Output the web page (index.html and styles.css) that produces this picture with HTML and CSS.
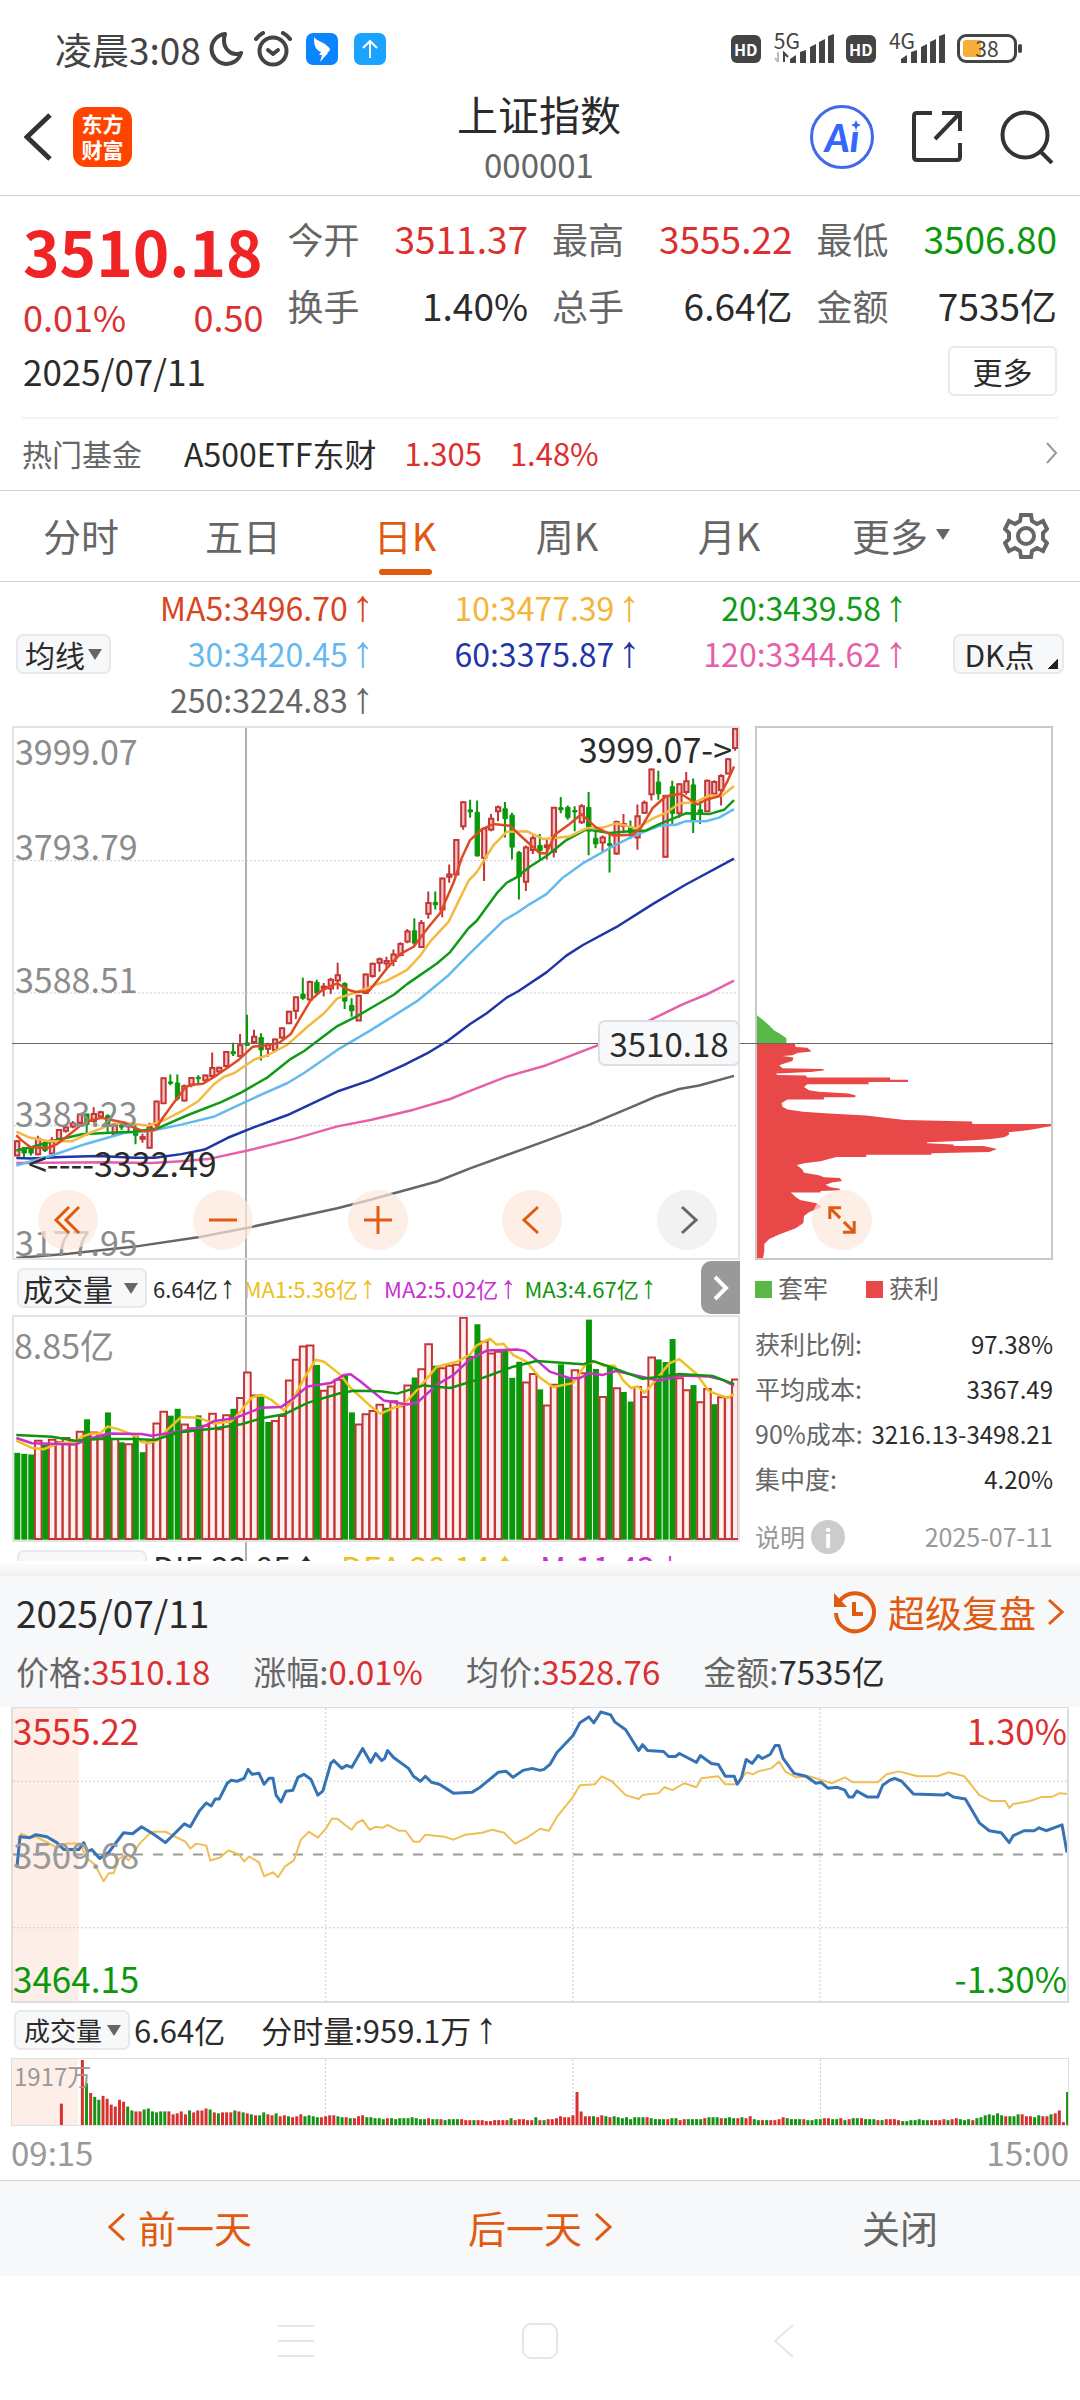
FILE: index.html
```html
<!DOCTYPE html>
<html lang="zh-CN">

<head>
  <meta charset="UTF-8">
  <meta name="viewport" content="width=device-width, initial-scale=1.0">
  <title>上证指数 000001</title>

  <link rel="stylesheet" href="styles.css">
</head>

<body>

  <div class="statusbar">
    <span class="clock">凌晨3:08</span>
    <svg class="st-moon" width="34" height="36" viewBox="0 0 34 36"><path d="M16 3A15 15 0 1 0 32 22C22 26 12 17 16 3Z" fill="none" stroke="#444" stroke-width="4" stroke-linejoin="round"/></svg>
    <svg class="st-alarm" width="38" height="36" viewBox="0 0 38 36"><g fill="none" stroke="#444" stroke-width="4" stroke-linecap="round"><circle cx="19" cy="20" r="13.5"/><path d="M2 8Q5 4 9 2M36 8Q33 4 29 2"/><path d="M14 19L19 23L24 19" stroke-linejoin="round"/></g></svg>
    <svg class="st-app" width="32" height="32" viewBox="0 0 32 32"><rect width="32" height="32" rx="7" fill="#0a84ff"/><path d="M8 4C10 8 21 10 24 16C24 18 21 20 21 20H22L14 29L16 22H13L15 19C10 17 9 13 9 13C8 10 8 7 8 4Z" fill="#fff"/></svg>
    <svg class="st-app" width="32" height="32" viewBox="0 0 32 32"><rect width="32" height="32" rx="7" fill="#1aa3ff"/><path d="M16 25V8M9 15L16 8L23 15" fill="none" stroke="#fff" stroke-width="2"/></svg>

    <div class="signals">
      <span class="hd">HD</span>
      <span class="net">5G</span>
      <svg class="bars" width="60" height="30" viewBox="0 0 60 30"><path d="M4 18V28M1 24L4 28" stroke="#bbb" stroke-width="2" fill="none"/><path d="M10 28V19L14 23" stroke="#444" stroke-width="2" fill="none"/><path d="M16 29V25L22 21V29ZM26 29V18L32 16V29ZM36 29V13L42 10V29ZM45 29V8L51 5V29ZM54 29V2L60 0V29Z" fill="#444"/></svg>
      <span class="hd">HD</span>
      <span class="net">4G</span>
      <svg class="bars" width="44" height="30" viewBox="16 0 44 30"><path d="M16 29V25L22 21V29ZM26 29V18L32 16V29ZM36 29V13L42 10V29ZM45 29V8L51 5V29ZM54 29V2L60 0V29Z" fill="#444"/></svg>
      <span class="battery">38</span>
    </div>
  </div>

  <header class="topbar">
    <button class="icon-btn" aria-label="返回"><svg width="30" height="50" viewBox="0 0 30 50"><path d="M26 3L3 25L26 47" fill="none" stroke="#333" stroke-width="5"/></svg></button>
    <a class="logo" href="#">东方<br>财富</a>
    <div class="title">
      <h1>上证指数</h1>
      <p>000001</p>
    </div>
    <div class="actions">
      <button class="ai" aria-label="AI 助手">Ai<svg width="10" height="10" viewBox="0 0 10 10"><path d="M5 0L6.500 3.500L10 5L6.500 6.500L5 10L3.500 6.500L0 5L3.500 3.500Z" fill="#3366ff"/></svg></button>
      <button class="icon-btn" aria-label="分享"><svg width="52" height="54" viewBox="0 0 52 54"><g fill="none" stroke="#333" stroke-width="4"><path d="M21 3H6Q3 3 3 6V47Q3 50 6 50H46Q49 50 49 47V33"/><path d="M31 3H49V21M48 4L24 29"/></g></svg></button>
      <button class="icon-btn" aria-label="搜索"><svg width="54" height="54" viewBox="0 0 54 54"><g fill="none" stroke="#333" stroke-width="4"><circle cx="25" cy="25" r="22.500"/><path d="M40 41L52 53"/></g></svg></button>
    </div>
  </header>

  <section class="quote">
    <div class="quote-grid">
      <div class="price-box">
        <strong class="price">3510.18</strong>
        <div class="change"><span>0.01%</span><span>0.50</span></div>
      </div>
      <dl class="stats">
        <div><dt>今开</dt><dd class="red">3511.37</dd></div>
        <div><dt>换手</dt><dd>1.40%</dd></div>
      </dl>
      <dl class="stats">
        <div><dt>最高</dt><dd class="red">3555.22</dd></div>
        <div><dt>总手</dt><dd>6.64亿</dd></div>
      </dl>
      <dl class="stats">
        <div><dt>最低</dt><dd class="green">3506.80</dd></div>
        <div><dt>金额</dt><dd>7535亿</dd></div>
      </dl>
    </div>
    <div class="quote-foot">
      <time>2025/07/11</time>
      <button class="more">更多</button>
    </div>
  </section>

  <a class="fund" href="#">
    <span class="fund-label">热门基金</span>
    <span class="fund-name">A500ETF东财</span>
    <span class="red">1.305</span>
    <span class="red">1.48%</span>
    <svg width="12" height="22" viewBox="0 0 12 22"><path d="M1 1L10 11L1 21" fill="none" stroke="#999" stroke-width="2"/></svg>
  </a>

  <nav class="tabs">
    <button>分时</button>
    <button>五日</button>
    <button class="active">日K</button>
    <button>周K</button>
    <button>月K</button>
    <button class="tab-more">更多<i class="caret"></i></button>
    <button class="gear" aria-label="设置"><svg width="46" height="48" viewBox="0 0 46 48"><g fill="none" stroke="#666" stroke-width="4"><path d="M18 3H28L29 9L34 12L40 9L44 17L40 21V27L44 31L40 39L34 36L29 39L28 45H18L17 39L12 36L6 39L2 31L6 27V21L2 17L6 9L12 12L17 9Z"/><circle cx="23" cy="24" r="8"/></g></svg></button>
  </nav>

  <section class="averages">
    <label class="picker picker-ma"><select aria-label="指标"><option>均线</option></select></label>
    <ul class="ma-list">
      <li class="c-ma5">MA5:3496.70<i class="arr">↑</i></li>
      <li class="c-ma10">10:3477.39<i class="arr">↑</i></li>
      <li class="c-ma20">20:3439.58<i class="arr">↑</i></li>
      <li class="c-ma30">30:3420.45<i class="arr">↑</i></li>
      <li class="c-ma60">60:3375.87<i class="arr">↑</i></li>
      <li class="c-ma120">120:3344.62<i class="arr">↑</i></li>
      <li class="c-ma250">250:3224.83<i class="arr">↑</i></li>
    </ul>
    <button class="dk">DK点</button>
  </section>

  <section class="stage">
    <div class="cross-h"></div>

    <div class="left">
      <div class="cross-v"></div>
      <div class="kline">
        <svg id="kline" viewBox="36 20 2181 1490" preserveAspectRatio="none"></svg>
        <span class="axis axis-1">3999.07</span>
        <span class="axis axis-2">3793.79</span>
        <span class="axis axis-3">3588.51</span>
        <span class="axis axis-4">3383.23</span>
        <span class="axis axis-5">3177.95</span>
        <span class="mark mark-high">3999.07-&gt;</span>
        <span class="mark mark-low">&lt;----3332.49</span>
        <output class="tag">3510.18</output>
        <div class="tools">
          <button aria-label="最早"><svg width="30" height="30" viewBox="0 0 30 30"><path d="M16 2L3 15L16 28M26 2L13 15L26 28"/></svg></button>
          <button aria-label="缩小"><svg width="30" height="30" viewBox="0 0 30 30"><path d="M1 15H29"/></svg></button>
          <button aria-label="放大"><svg width="30" height="30" viewBox="0 0 30 30"><path d="M1 15H29M15 1V29"/></svg></button>
          <button aria-label="左移"><svg width="30" height="30" viewBox="0 0 30 30"><path d="M21 2L7 15L21 28"/></svg></button>
          <button class="off" aria-label="右移"><svg width="30" height="30" viewBox="0 0 30 30"><path d="M10 2L24 15L10 28"/></svg></button>
        </div>
      </div>

      <div class="vol-head">
        <label class="picker picker-vol"><select aria-label="副图一"><option>成交量</option></select></label>
        <p class="vol-vals">
          <span>6.64亿<i class="arr">↑</i></span>
          <span class="c-v1">MA1:5.36亿<i class="arr">↑</i></span>
          <span class="c-v2">MA2:5.02亿<i class="arr">↑</i></span>
          <span class="c-v3">MA3:4.67亿<i class="arr">↑</i></span>
        </p>
        <button class="slide" aria-label="展开"><svg width="16" height="26" viewBox="0 0 16 26"><path d="M2 2L13 13L2 24" fill="none" stroke="#fff" stroke-width="4"/></svg></button>
      </div>

      <div class="volume">
        <svg id="volume" viewBox="36 194 2181 678" preserveAspectRatio="none"></svg>
        <span class="axis">8.85亿</span>
      </div>

      <div class="macd">
        <label class="picker picker-vol"><select aria-label="副图二"><option>MACD</option></select></label>
        <p class="macd-vals">
          <span>DIF:33.85<i class="arr">↑</i></span>
          <span class="c-v1">DEA:28.14<i class="arr">↑</i></span>
          <span class="c-v2">M:11.43<i class="arr">↓</i></span>
        </p>
      </div>
    </div>

    <aside class="right">
      <div class="chips">
        <svg viewBox="48 -609 888 1391" preserveAspectRatio="none">
          <path fill="#5ab946" d="M48 145L70 160L85 172L100 185L115 192L137 205V220H48Z"/>
          <path fill="#e84848" d="M48 220H162L165 228L200 230L213 240L170 244L155 250L125 252L158 256L155 265L135 270L115 276L125 284L249 286V290L210 294L105 298L110 302L195 303L200 308H450V314H504V320H385V326H200L190 333L205 342L235 346L325 350L345 355V360H250V366H140L122 375L125 385L140 392L187 398L265 403L378 408L428 413L495 420L698 424V430H936V436L920 438L870 446L808 452L810 458L795 465L755 470L678 474L562 478V481L642 484V488H732L773 496L750 504L575 507V511H378V517H288L240 528L190 533L168 538L185 550L190 558L235 565L250 570L298 572L305 580L275 584L255 590L270 596L298 600V604L240 606V610H150L165 622L178 630L228 638L242 648L225 655L205 662L190 672L188 690L165 704L115 720L85 732L70 745V765L66 782H48Z"/>
        </svg>
        <button class="expand" aria-label="全屏"><svg width="32" height="32" viewBox="0 0 32 32"><path d="M15 3H3V15M3 3L14 14M18 18L29 29M29 17V29H17"/></svg></button>
      </div>

      <div class="legend"><span class="loss">套牢</span><span class="gain">获利</span></div>
      <dl class="costs">
        <div><dt>获利比例:</dt><dd>97.38%</dd></div>
        <div><dt>平均成本:</dt><dd>3367.49</dd></div>
        <div><dt>90%成本:</dt><dd>3216.13-3498.21</dd></div>
        <div><dt>集中度:</dt><dd>4.20%</dd></div>
      </dl>
      <div class="note">
        <button>说明<i class="info">i</i></button>
        <time>2025-07-11</time>
      </div>
    </aside>
  </section>

  <section class="day">
    <div class="day-top">
      <time>2025/07/11</time>
      <a href="#" class="replay">
        <svg width="44" height="44" viewBox="0 0 44 44"><path d="M7 12A19 19 0 1 1 4 23" fill="none" stroke="#e05a10" stroke-width="4"/><path d="M2 3V17H15Z" fill="#e05a10"/><path d="M22 12V24H31" fill="none" stroke="#e05a10" stroke-width="4"/></svg>
        超级复盘
        <svg width="16" height="28" viewBox="0 0 16 28"><path d="M1 2L14 14L1 26" fill="none" stroke="#e05a10" stroke-width="3"/></svg>
      </a>
    </div>
    <dl class="day-vals">
      <div><dt>价格:</dt><dd class="red">3510.18</dd></div>
      <div><dt>涨幅:</dt><dd class="red">0.01%</dd></div>
      <div><dt>均价:</dt><dd class="red">3528.76</dd></div>
      <div><dt>金额:</dt><dd>7535亿</dd></div>
    </dl>
  </section>

  <section class="minute">
    <div class="trend">
      <svg id="trend" viewBox="11 1707 1058 296" preserveAspectRatio="none"></svg>
      <span class="lim lim-tl red">3555.22</span>
      <span class="lim lim-ml">3509.68</span>
      <span class="lim lim-bl green">3464.15</span>
      <span class="lim lim-tr red">1.30%</span>
      <span class="lim lim-br green">-1.30%</span>
    </div>
    <div class="minute-head">
      <label class="picker picker-min"><select aria-label="分时指标"><option>成交量</option></select></label>
      <span>6.64亿</span>
      <span class="minute-now">分时量:959.1万<i class="arr">↑</i></span>
    </div>
    <div class="ticks">
      <svg id="ticks" viewBox="11 0 1058 68" preserveAspectRatio="none"></svg>
      <span class="ticks-max">1917万</span>
    </div>
    <div class="hours"><time>09:15</time><time>15:00</time></div>
  </section>

  <div class="pager">
    <button class="go"><svg width="18" height="28" viewBox="0 0 18 28"><path d="M16 1L2 14L16 27"/></svg>前一天</button>
    <button class="go">后一天<svg width="18" height="28" viewBox="0 0 18 28"><path d="M2 1L16 14L2 27"/></svg></button>
    <button>关闭</button>
  </div>

  <div class="sysnav">
    <svg viewBox="0 0 36 36"><path d="M0 3H36M0 18H36M0 33H36"/></svg>
    <svg viewBox="0 0 36 36"><rect x="1" y="1" width="34" height="34" rx="8"/></svg>
    <svg viewBox="0 0 36 36"><path d="M27 2L9 18L27 34"/></svg>
  </div>

  <script src="script.js"></script>
</body>

</html>
```
FILE: styles.css
```css
:root {
  --red: #dc2f2f;
  --green: #0c980c;
  --orange: #e05a10;
  --text: #2b2b2b;
  --muted: #666;
  --light: #999;
  --line: #d2d2d2;
  --soft: #f7f8fa;
}

* {
  box-sizing: border-box;
  margin: 0;
  padding: 0;
}

body {
  background: #fff;
  color: var(--text);
  font-family: "Noto Sans CJK SC", "Noto Sans", sans-serif;
  font-size: 32px;
}

button, select {
  font: inherit;
  color: inherit;
  background: none;
  border: 0;
}

a { color: inherit; text-decoration: none; }
ul { list-style: none; }
svg { display: block; flex: none; }

.red { color: var(--red); }
.green { color: var(--green); }

.arr {
  font-family: "Liberation Sans", sans-serif;
  font-size: 44px;
  font-style: normal;
  line-height: 0;
  margin: 0 -4px 0 4px;
}

/* status bar */
.statusbar {
  display: flex;
  align-items: center;
  height: 82px;
  padding: 15px 58px 0 55px;
  color: #444;
}

.clock { font-size: 37px; line-height: 48px; }
.st-moon { margin-left: 8px; }
.st-alarm { margin-left: 11px; }
.st-app { margin-left: 14px; }
.st-app + .st-app { margin-left: 16px; }

.signals {
  display: flex;
  align-items: center;
  margin-left: auto;
}

.hd {
  width: 30px;
  border-radius: 6px;
  background: #444;
  color: #fff;
  font-size: 16px;
  font-weight: 700;
  line-height: 28px;
  text-align: center;
}

.net {
  align-self: flex-start;
  margin: -4px -26px 0 13px;
  font-size: 21px;
  line-height: 20px;
}

.hd + .net + .bars { margin-right: 12px; }
.bars[width="44"] { margin-left: 12px; }

.battery {
  position: relative;
  width: 60px;
  margin-right: 5px;
  border: 3px solid #444;
  border-radius: 9px;
  background: linear-gradient(90deg, #f7b037 18px, #fff 18px) content-box;
  padding: 3px;
  font-size: 21px;
  line-height: 17px;
  text-align: center;
}

.battery::after {
  content: "";
  position: absolute;
  right: -8px;
  top: 7px;
  width: 4px;
  height: 9px;
  border-radius: 2px;
  background: #444;
}

/* header */
.topbar {
  display: grid;
  grid-template-columns: 1fr auto 1fr;
  align-items: center;
  height: 114px;
  padding: 0 26px 3px 24px;
  border-bottom: 1px solid var(--line);
  grid-template-areas: "nav title actions";
}

.topbar .icon-btn:first-child { grid-area: nav; width: 30px; }

.logo {
  grid-area: nav;
  width: 59px;
  height: 60px;
  margin-left: 49px;
  padding: 3px 0;
  border-radius: 13px;
  background: #ff4400;
  color: #fff;
  font-size: 21px;
  font-weight: 700;
  line-height: 26px;
  text-align: center;
}

.title {
  grid-area: title;
  padding-top: 4px;
  text-align: center;
  line-height: 51px;
}

.title h1 { font-size: 41px; font-weight: 400; }
.title p { font-size: 33px; color: var(--muted); }

.actions {
  grid-area: actions;
  display: flex;
  align-items: center;
  justify-content: flex-end;
  gap: 37px;
}

.ai {
  position: relative;
  width: 64px;
  height: 64px;
  border: 3px solid #4169e8;
  border-radius: 50%;
  color: #3366ff;
  font-family: "Lato", sans-serif;
  font-size: 38px;
  font-weight: 900;
  font-style: italic;
  line-height: 58px;
}

.ai svg { position: absolute; right: 10px; top: 12px; background: #fff; }

/* quote */
.quote { padding: 9px 23px 21px; }

.quote-grid {
  display: grid;
  grid-template-columns: repeat(4, minmax(0, 1fr));
  gap: 24px;
}

.price-box { padding-top: 9px; color: var(--red); }

.price {
  display: block;
  color: #f02424;
  font-size: 62px;
  line-height: 72px;
}

.change {
  display: flex;
  justify-content: space-between;
  font-size: 36px;
  line-height: 60px;
}

.stats div {
  display: flex;
  justify-content: space-between;
  line-height: 67px;
}

.stats dt { font-size: 36px; color: var(--muted); }
.stats dd { font-size: 37px; }

.quote-foot {
  display: flex;
  align-items: center;
  justify-content: space-between;
  font-size: 35px;
  line-height: 50px;
}

.more {
  width: 109px;
  height: 50px;
  border: 2px solid #e8e8e8;
  border-radius: 6px;
  font-size: 30px;
  line-height: 44px;
}

/* hot fund */
.fund {
  display: flex;
  align-items: center;
  gap: 28px;
  margin: 0 22px;
  height: 73px;
  padding-bottom: 4px;
  border-top: 2px solid #f3f3f3;
  font-size: 31px;
}

.fund-label { font-size: 30px; color: var(--muted); }
.fund-name { margin-left: 14px; font-size: 32px; }
.fund svg { margin-left: auto; }

/* tabs */
.tabs {
  display: grid;
  grid-template-columns: repeat(6, 3fr) 2fr;
  height: 92px;
  border: solid var(--line);
  border-width: 1px 0;
  color: var(--muted);
}

.tabs button {
  position: relative;
  display: flex;
  align-items: center;
  justify-content: center;
  padding-bottom: 3px;
  font-size: 38px;
}

.tabs .gear { padding-bottom: 0; }
.tabs .tab-more { padding-left: 20px; }

.tabs .active { color: var(--orange); }

.tabs .active::after {
  content: "";
  position: absolute;
  bottom: 6px;
  width: 53px;
  height: 6px;
  border-radius: 3px;
  background: var(--orange);
}

.caret {
  margin-left: 8px;
  border: solid transparent;
  border-width: 11px 7px 0;
  border-top-color: var(--muted);
}

/* moving averages */
.averages {
  display: flex;
  align-items: center;
  height: 144px;
  padding: 0 16px;
}

.picker {
  position: relative;
  display: flex;
  align-items: center;
  flex: none;
  height: 40px;
  border: 2px solid #e6e8eb;
  border-radius: 7px;
  background: var(--soft);
}

.picker select {
  appearance: none;
  width: 100%;
  height: 46px;
  padding-left: 7px;
  font-size: 30px;
}

.picker::after {
  content: "";
  position: absolute;
  right: 7px;
  top: 13px;
  border: solid transparent;
  border-width: 11px 7px 0;
  border-top-color: var(--muted);
  pointer-events: none;
}

.picker-ma { width: 95px; }
.picker-vol { width: 130px; }
.picker-vol select { padding-left: 4px; }
.picker-min { width: 116px; }
.picker-min select { padding-left: 8px; font-size: 26px; }

.ma-list {
  display: grid;
  flex: 793;
  grid-template-columns: 259fr 267fr 267fr;
  padding-bottom: 2px;
  line-height: 46px;
  text-align: right;
}

.c-ma5 { color: #d9441f; }
.c-ma10 { color: #f3b53a; }
.c-ma20 { color: #0f9a17; }
.c-ma30 { color: #64b9ee; }
.c-ma60 { color: #1f35a8; }
.c-ma120 { color: #e75fa9; }
.c-ma250 { color: #666; }

.dk {
  position: relative;
  width: 111px;
  height: 40px;
  margin-left: 50px;
  padding-right: 18px;
  border: 2px solid #e6e8eb;
  border-radius: 7px;
  background: var(--soft);
  font-size: 30px;
  line-height: 34px;
}

.dk::after {
  content: "";
  position: absolute;
  right: 4px;
  bottom: 3px;
  width: 11px;
  height: 11px;
  background: linear-gradient(135deg, transparent 50%, #222 50%);
}

/* charts */
.stage {
  position: relative;
  display: grid;
  grid-template-columns: 728fr 298fr;
  gap: 15px;
  padding: 0 27px 0 12px;
}

.cross-h {
  position: absolute;
  z-index: 1;
  left: 12px;
  right: 27px;
  top: 317px;
  height: 1px;
  background: #666;
}

.left { position: relative; }

.cross-v {
  position: absolute;
  left: 32%;
  top: 0;
  bottom: 0;
  width: 2px;
  background: #b0b0b0;
}

.kline, .volume {
  position: relative;
  border: 2px solid #e3e3e3;
}

.kline { height: 534px; }
.volume { height: 227px; }

.kline svg, .volume svg, .chips svg, .trend svg, .ticks svg {
  width: 100%;
  height: 100%;
}

svg * { vector-effect: non-scaling-stroke; }

.axis {
  position: absolute;
  left: 1px;
  color: #8c8c8c;
  font-size: 34px;
  line-height: 36px;
}

.axis-1 { top: 5px; }
.axis-2 { top: 100px; }
.axis-3 { top: 233px; }
.axis-4 { top: 367px; }
.axis-5 { top: 496px; }
.volume .axis { left: 0; top: 10px; }

.mark {
  position: absolute;
  font-size: 34px;
  line-height: 36px;
}

.mark-high { right: 6px; top: 3px; }
.mark-low { left: 14px; top: 417px; }

.tag {
  position: absolute;
  z-index: 2;
  right: -2px;
  top: 292px;
  width: 142px;
  border: 2px solid #dcdfe4;
  border-radius: 7px;
  background: var(--soft);
  font-size: 33px;
  line-height: 42px;
  text-align: center;
}

.tools {
  position: absolute;
  left: 24px;
  right: 21px;
  bottom: 8px;
  display: flex;
  justify-content: space-between;
}

.tools button, .expand {
  display: flex;
  align-items: center;
  justify-content: center;
  width: 60px;
  height: 60px;
  border-radius: 50%;
  background: rgba(253, 232, 220, 0.7);
}

.tools svg, .expand svg {
  width: 30px;
  height: 30px;
  fill: none;
  stroke: var(--orange);
  stroke-width: 3;
}

.tools .off { background: #f2f2f2; }
.tools .off svg { stroke: var(--muted); }

.vol-head {
  display: flex;
  align-items: center;
  height: 55px;
  padding-left: 5px;
}

.vol-vals {
  display: flex;
  flex: 1;
  gap: 10px;
  padding-left: 6px;
  font-size: 22px;
  line-height: 40px;
  white-space: nowrap;
}

.vol-vals .arr {
  margin: 0 -2px 0 2px;
  font-size: 32px;
}

.c-v1 { color: #ecc020; }
.c-v2 { color: #c930d0; }
.c-v3 { color: #109410; }

.slide {
  display: flex;
  align-items: center;
  justify-content: center;
  width: 39px;
  height: 53px;
  border-radius: 10px 0 0 10px;
  background: #999;
}

/* only the top edge of this row shows above the day panel */
.macd {
  display: flex;
  height: 19px;
  padding: 8px 0 0 5px;
  overflow: hidden;
}

.macd-vals {
  display: flex;
  gap: 28px;
  padding-left: 6px;
  line-height: 34px;
}

.chips {
  position: relative;
  height: 534px;
  border: 2px solid #c9c9c9;
}

.expand {
  position: absolute;
  left: 55px;
  bottom: 8px;
}

.legend {
  display: flex;
  gap: 38px;
  margin-bottom: 6px;
  color: var(--muted);
  font-size: 25px;
  line-height: 55px;
}

.legend span::before {
  content: "";
  display: inline-block;
  width: 17px;
  height: 17px;
  margin-right: 6px;
}

.legend .loss::before { background: #5ab946; }
.legend .gain::before { background: #e84848; }

.costs div, .note {
  display: flex;
  align-items: center;
  justify-content: space-between;
  font-size: 24px;
  line-height: 45px;
  white-space: nowrap;
}

.costs dt { font-size: 25px; color: var(--muted); }

.note { margin-top: 13px; color: var(--light); font-size: 25px; }
.note button { display: flex; align-items: center; gap: 6px; }

.info {
  width: 34px;
  border-radius: 50%;
  background: #ccc;
  color: #fff;
  font-style: normal;
  font-weight: 700;
  line-height: 34px;
}

/* day panel */
.day {
  position: relative;
  margin-top: 15px;
  padding: 0 16px 13px;
  background: var(--soft);
}

.day::before {
  content: "";
  position: absolute;
  left: 0;
  right: 0;
  top: -15px;
  height: 15px;
  background: linear-gradient(#fff, #f0f0f0);
}

.day-top {
  display: flex;
  justify-content: space-between;
  font-size: 37px;
  line-height: 72px;
}

.replay {
  display: flex;
  align-items: center;
  gap: 12px;
  color: var(--orange);
}

.day-vals {
  display: flex;
  gap: 43px;
  font-size: 33px;
  line-height: 46px;
}

.day-vals div { display: flex; }
.day-vals dt { color: var(--muted); }

/* minute chart */
.minute { padding: 0 11px; }

.trend {
  position: relative;
  height: 296px;
  border: 2px solid #dedede;
  border-top-width: 1px;
}

.lim {
  position: absolute;
  font-size: 35px;
  line-height: 40px;
}

.lim-tl { left: 0; top: 2px; }
.lim-ml { left: 0; top: 126px; color: var(--light); }
.lim-bl { left: 0; bottom: 3px; }
.lim-tr { right: 0; top: 2px; }
.lim-br { right: 0; bottom: 3px; }

.minute-head {
  display: flex;
  align-items: center;
  gap: 4px;
  height: 55px;
  padding: 0 0 2px 3px;
  font-size: 31px;
  line-height: 44px;
  white-space: nowrap;
}

.minute-now { margin-left: 32px; }

.ticks {
  position: relative;
  height: 68px;
  border: 1px solid #dedede;
}

.ticks-max {
  position: absolute;
  left: 2px;
  top: 2px;
  color: var(--light);
  font-size: 24px;
  line-height: 30px;
}

.hours {
  display: flex;
  justify-content: space-between;
  padding-bottom: 2px;
  color: var(--light);
  font-size: 33px;
  line-height: 52px;
}

/* bottom */
.pager {
  display: grid;
  grid-template-columns: repeat(3, 1fr);
  height: 96px;
  border-top: 1px solid var(--line);
  background: var(--soft);
  color: var(--muted);
}

.pager button {
  display: flex;
  align-items: center;
  justify-content: center;
  gap: 12px;
  padding-bottom: 4px;
  font-size: 38px;
}

.pager .go { color: var(--orange); }

.pager svg {
  fill: none;
  stroke: var(--orange);
  stroke-width: 3;
}

.sysnav {
  display: flex;
  align-items: center;
  justify-content: center;
  gap: 208px;
  height: 123px;
  padding-top: 6px;
}

.sysnav svg {
  width: 36px;
  height: 36px;
  fill: none;
  stroke: #e6e6e6;
  stroke-width: 2;
}
```
FILE: script.js
```js
const RED = '#c43636';
const GREEN = '#08980a';

// high, body top, body bottom, low
const candles = `r1178,1182,1222,1222 g1198,1200,1215,1228 g1198,1200,1215,1222 r1166,1175,1218,1222 g1178,1185,1208,1212
r1170,1180,1216,1218 r1148,1150,1175,1178 r1138,1143,1152,1158 r1125,1132,1140,1145 r1105,1107,1130,1133
g1105,1105,1135,1165 r1086,1105,1125,1130 r1096,1100,1112,1118 g1106,1110,1140,1158 r1130,1135,1163,1166
g1128,1130,1142,1150 r1130,1133,1140,1155 g1135,1145,1165,1190 r1160,1170,1175,1186 r1130,1142,1200,1202
r1068,1070,1135,1140 r1003,1005,1075,1077 g994,1015,1018,1024 g994,1018,1062,1068 r1022,1027,1067,1070
r1002,1004,1022,1030 g996,1002,1006,1020 r994,997,1010,1015 r932,976,998,1004 r972,975,986,990
r928,931,970,975 g905,930,936,942 r880,912,942,946 g826,905,912,912 r868,888,903,905
g878,890,925,955 r905,912,922,944 r893,896,925,930 r862,864,890,895 r815,818,850,852
r775,777,815,838 g722,768,780,784 r730,734,783,787 g728,735,765,768 r737,747,752,775
r722,728,752,768 r680,715,730,755 g735,738,788,810 g780,800,815,832 r770,773,842,844
r710,713,765,768 r680,683,717,722 r665,670,680,705 r663,675,682,695 r643,657,675,690
r622,627,658,662 r585,592,620,625 g555,590,625,630 r560,568,636,638 r480,512,542,556
g480,510,517,530 r440,443,530,552 r404,432,438,455 r332,335,432,435 r226,229,296,306
g222,250,256,272 g224,257,380,380 r298,303,385,450 r262,275,305,310 r238,243,254,282
g228,247,275,328 g258,265,355,390 g366,370,438,502 r350,356,452,478 r322,330,363,374
g318,350,365,390 r333,350,355,390 r242,244,368,384 g214,244,250,260 g238,243,272,278
g240,252,256,310 r234,240,285,290 g200,243,310,378 g305,330,346,358 r322,328,342,370
g320,345,350,426 r280,284,373,376 r262,290,295,310 g280,300,315,332 r235,268,328,362
r224,230,258,262 r134,137,206,224 g140,172,205,222 r208,211,382,384 g168,185,260,290
r175,178,260,272 r144,170,200,208 g162,180,280,315 g225,250,260,290 r165,168,254,256
r167,172,205,208 r150,155,195,238 r104,108,148,150 r20,22,76,84`.split(/\s+/);

const klineMa = [
  ['#666', '43,1510 200,1498 400,1478 600,1450 740,1425 1010,1370 1110,1346 1310,1295 1410,1258 1640,1180 1770,1135 1910,1080 1970,1056 2040,1035 2100,1025 2205,998'],
  ['#e75fa9', '43,1243 300,1241 450,1243 540,1238 620,1232 740,1208 880,1175 1010,1140 1110,1122 1240,1093 1350,1063 1410,1040 1520,1000 1640,968 1800,910 1960,838 2050,797 2120,770 2205,730'],
  ['#1f35a8', '43,1229 90,1230 180,1226 290,1223 400,1228 460,1228 540,1218 610,1205 680,1172 760,1142 860,1108 1010,1042 1110,1010 1210,968 1280,935 1345,898 1410,852 1460,822 1520,778 1555,760 1640,707 1700,660 1750,630 1850,580 1960,515 2060,460 2205,387'],
  ['#64b9ee', '43,1250 150,1222 250,1190 370,1158 450,1152 540,1135 640,1112 740,1068 860,1018 910,990 1010,925 1110,870 1250,788 1345,715 1410,653 1510,562 1550,540 1590,515 1640,487 1690,440 1750,400 1830,358 1910,320 1980,295 2030,292 2060,282 2120,282 2160,272 2205,248'],
  ['#0f9a17', '43,1208 90,1198 150,1182 240,1162 340,1157 400,1155 470,1145 560,1108 660,1072 720,1045 800,1002 870,950 910,928 1010,858 1070,830 1110,808 1180,770 1220,740 1310,682 1350,650 1405,583 1430,562 1490,485 1520,455 1550,440 1590,410 1640,380 1700,335 1760,305 1830,315 1890,310 1940,308 1980,290 2060,260 2130,262 2175,250 2205,223'],
  ['#f5b942', '43,1155 85,1172 140,1182 210,1182 260,1160 320,1138 370,1130 440,1138 490,1122 540,1098 590,1070 640,1020 670,1000 700,990 760,952 800,940 860,910 920,860 970,822 1010,780 1060,765 1160,730 1220,700 1260,660 1290,620 1345,565 1405,450 1430,425 1480,350 1520,312 1580,310 1630,332 1710,325 1760,302 1810,300 1850,288 1910,302 1960,275 2000,258 2040,232 2090,228 2130,210 2170,210 2205,183'],
  ['#e04a22', '43,1165 60,1180 85,1198 110,1200 140,1200 165,1190 200,1165 240,1135 270,1122 300,1116 330,1122 370,1130 400,1145 430,1154 460,1150 485,1115 520,1070 555,1028 580,1022 605,1020 640,1000 675,978 710,955 755,916 790,913 835,905 870,880 895,840 930,785 960,760 990,745 1010,738 1040,755 1065,762 1105,760 1160,695 1200,655 1240,635 1280,585 1320,540 1360,455 1385,385 1410,335 1445,305 1480,290 1530,295 1570,330 1620,372 1640,372 1665,320 1710,290 1745,262 1790,300 1840,322 1900,320 1925,300 1960,245 2000,212 2045,205 2095,235 2120,222 2160,212 2185,170 2205,128']
];

const volumes = `g607 g610 g612 r570 g583 r567 r575 r562 r572 r543 g505 r545 r558 g484 r565 g575 r581 g555 g605 r575
r518 r482 g494 g473 r521 r532 g493 r525 r488 r535 r493 g473 r440 r363 r433 g436 g513 r510 r495 r387
r324 r284 r281 g340 r418 r405 r385 g371 g484 r521 r490 r480 r461 g470 r450 r465 r402 g378 r353 r277
g342 r350 r342 r339 r196 g312 g216 r269 r305 r300 g292 g379 g330 r393 r367 g414 r463 r400 g338 g380
r356 r365 g202 g352 r437 g340 r411 g422 g451 r407 r437 r317 g323 g331 g261 r380 r417 g401 r453 r413
g459 r438 r438 r384`.split(/\s+/);

const volumeMa = [
  ['#f0c020', '43,570 90,592 125,596 170,578 220,575 240,558 270,548 295,548 318,527 350,535 400,555 420,574 440,578 470,568 500,535 540,498 590,500 640,518 690,512 720,480 750,440 780,430 810,445 850,478 880,440 910,380 945,324 970,330 1020,370 1050,410 1110,465 1140,488 1180,470 1210,460 1260,405 1310,345 1370,330 1410,308 1430,280 1470,260 1490,278 1510,275 1540,310 1580,330 1620,378 1660,407 1720,395 1760,335 1790,330 1810,342 1845,342 1870,385 1895,410 1915,405 1935,425 1970,385 2010,335 2040,322 2090,365 2130,420 2185,440 2205,428'],
  ['#c930c9', '43,562 90,578 220,582 260,565 320,548 420,550 450,555 530,543 600,530 640,510 700,502 780,470 840,468 880,440 920,405 990,395 1030,370 1050,368 1080,390 1150,448 1220,460 1250,455 1310,400 1360,370 1410,322 1460,296 1550,293 1575,297 1610,325 1650,360 1710,380 1740,380 1770,365 1810,370 1850,358 1910,372 1980,388 2040,372 2130,375 2170,385 2205,403'],
  ['#109410', '43,553 150,558 220,570 290,565 400,565 460,568 530,545 640,533 720,520 790,500 850,490 920,455 1020,425 1060,418 1140,420 1190,427 1270,402 1350,410 1440,382 1540,345 1610,328 1750,338 1780,328 1830,345 1930,382 1990,375 2040,367 2140,373 2205,398']
];

const average = '15,1863 19,1834 28,1838 34,1837 55,1848 65,1844 79,1844 84,1858 93,1865 102,1882 107,1874 112,1874 117,1860 122,1856 127,1861 138,1844 150,1832 164,1832 184,1842 189,1849 195,1844 205,1846 209,1861 219,1858 227,1851 238,1855 243,1862 248,1857 258,1863 263,1877 272,1873 277,1878 284,1867 293,1861 300,1840 308,1832 317,1838 325,1829 331,1819 337,1819 344,1825 351,1830 356,1823 362,1820 369,1830 375,1827 382,1828 387,1825 398,1831 405,1831 413,1842 419,1842 425,1835 444,1837 453,1840 465,1835 482,1833 492,1830 504,1833 515,1844 527,1838 540,1829 549,1831 557,1817 573,1797 580,1785 595,1784 602,1776 612,1781 626,1795 639,1799 643,1795 659,1793 665,1787 673,1790 685,1783 697,1787 702,1778 719,1776 726,1784 738,1784 747,1772 754,1774 759,1771 772,1768 780,1761 786,1771 797,1777 810,1776 833,1783 846,1777 854,1782 879,1782 888,1774 900,1771 919,1776 939,1776 950,1772 966,1776 981,1795 993,1801 1007,1801 1011,1808 1015,1804 1032,1801 1043,1797 1053,1797 1062,1793 1069,1794';

const price = '15,1868 18,1837 28,1838 34,1835 45,1837 55,1843 62,1850 77,1850 82,1843 86,1852 90,1850 98,1859 107,1853 122,1833 131,1834 140,1827 153,1835 164,1843 172,1835 183,1824 189,1827 198,1811 205,1803 210,1806 214,1799 218,1799 226,1783 230,1780 236,1781 243,1778 247,1769 251,1774 258,1773 263,1784 268,1778 272,1778 275,1795 280,1802 285,1791 292,1790 297,1777 303,1774 310,1779 317,1795 322,1791 330,1763 333,1760 341,1768 346,1765 351,1767 362,1748 370,1762 375,1753 381,1760 384,1758 387,1750 393,1757 408,1768 413,1776 420,1781 425,1776 431,1782 439,1784 453,1793 472,1792 480,1787 498,1772 506,1771 513,1777 523,1770 532,1768 540,1770 544,1769 550,1764 557,1752 573,1735 580,1722 589,1716 594,1722 601,1711 611,1714 615,1721 626,1729 639,1750 643,1744 648,1750 664,1751 669,1756 676,1756 680,1753 697,1762 701,1755 712,1763 719,1764 726,1776 735,1776 738,1784 742,1778 747,1759 753,1763 759,1755 763,1758 771,1754 776,1745 780,1745 784,1758 795,1773 807,1776 817,1783 822,1782 829,1788 838,1787 846,1790 850,1797 854,1797 858,1791 869,1797 879,1797 884,1785 891,1780 896,1778 903,1781 915,1794 945,1795 949,1793 955,1797 967,1799 981,1823 991,1831 1003,1833 1011,1843 1015,1836 1026,1831 1036,1831 1041,1828 1048,1831 1064,1825 1069,1853';

// one bar per minute from 09:30, 20 to a row
const minutes = `r67 g43 r33 g29 g26 r30 r27 r21 r19 r26 r24 g19 g15 r14 r14 g16 g17 g14 g13 g14
g14 r14 r11 r12 r14 r11 g15 r13 r15 r15 r17 g16 r13 g12 r13 r13 r13 g15 r14 g13
r12 g11 r10 g10 g13 r11 r10 g12 r9 r10 g9 r8 r9 r11 g9 g10 g9 g8 r8 r9
r10 r10 g9 g8 r8 g7 r7 r9 r10 g8 g8 g7 g7 g6 r7 g7 g6 g7 g7 g7
g8 g7 g6 g6 r7 g6 g6 r6 g5 g6 g6 g6 r6 r5 r5 g5 r5 r5 r4 r4
r5 r5 r5 r5 g7 r5 r6 r6 r5 r5 g8 r5 g5 r6 r6 r7 r9 r8 r8 r10
r34 r14 r9 r9 g9 r8 r10 g9 r8 g9 g8 g7 g8 g6 g8 g8 g8 r8 g7 g6
g6 g6 r6 g7 g7 r5 r6 g6 g6 g6 g6 r7 g8 g8 g8 r7 g7 g8 g7 r7
g8 r7 r9 g6 g5 r5 g5 r5 r5 r6 r8 g7 g6 g6 g6 r6 g5 g5 g6 g6
r7 r7 g6 g6 r7 g5 r6 g7 g7 r7 g6 g6 g6 r5 g5 r6 r6 r6 r5 g4
g4 g5 g5 g6 g5 g5 r5 r5 r5 r6 g5 r6 r7 g6 g5 g6 r5 g7 g8 g10
g11 g10 g12 g10 r9 g9 g9 g11 r11 r9 r9 g8 g10 r9 r9 g11 r12 r15 r3 g34`.split(/\s+/);

function line(points, color, width) {
  return `<polyline points="${points}" fill="none" stroke="${color}" stroke-width="${width}" stroke-linejoin="round"/>`;
}

function dotted(d) {
  return `<path d="${d}" stroke="#ccc" stroke-width="1" stroke-dasharray="2 2" fill="none"/>`;
}

function drawKline() {
  let out = dotted('M36 393H2217M36 765H2217M36 1138H2217');
  candles.forEach((c, i) => {
    const x = 45 + i * 21;
    const [high, top, bottom, low] = c.slice(1).split(',').map(Number);
    const up = c[0] === 'r';
    const color = up ? RED : GREEN;
    out += `<path d="M${x} ${high}V${top}M${x} ${bottom}V${low}" stroke="${color}" stroke-width="2"/>`;
    out += `<rect x="${x - 6}" y="${top}" width="13" height="${Math.max(bottom - top, 4)}" fill="${up ? '#f6c4c4' : GREEN}" stroke="${color}" stroke-width="${up ? 2 : 1}"/>`;
  });
  klineMa.forEach(([color, points]) => out += line(points, color, 2.5));
  document.getElementById('kline').innerHTML = out;
}

function drawVolume() {
  let out = '';
  volumes.forEach((v, i) => {
    const x = 45 + i * 21;
    const top = Number(v.slice(1));
    if (v[0] === 'r') {
      out += `<rect x="${x - 9}" y="${top}" width="20" height="${869 - top}" fill="#fff0f0" stroke="${RED}" stroke-width="2"/>`;
    } else {
      out += `<rect x="${x - 8}" y="${top}" width="18" height="${871 - top}" fill="${GREEN}"/>`;
    }
  });
  volumeMa.forEach(([color, points]) => out += line(points, color, 2.5));
  document.getElementById('volume').innerHTML = out;
}

function drawTrend() {
  let out = '<rect x="11" y="1707" width="66" height="296" fill="#fdeee8"/>';
  out += dotted('M11 1781H1069M11 1929H1069M325 1707V2003M573 1707V2003M821 1707V2003');
  out += '<path d="M11 1855H1069" stroke="#999" stroke-width="2" stroke-dasharray="10 10"/>';
  out += line(average, '#efbf55', 2) + line(price, '#3673b5', 3);
  document.getElementById('trend').innerHTML = out;
}

function drawTicks() {
  let out = '<rect x="11" y="0" width="66" height="68" fill="#fdeee8"/>';
  out += dotted('M325 0V68M573 0V68M821 0V68');
  out += '<rect x="59" y="46" width="3" height="22" fill="#d93030"/>';
  minutes.forEach((m, i) => {
    const h = Number(m.slice(1));
    const x = 80 + i * 4.13;
    out += `<rect x="${x.toFixed(1)}" y="${68 - h}" width="3" height="${h}" fill="${m[0] === 'r' ? '#d93030' : '#159315'}"/>`;
  });
  document.getElementById('ticks').innerHTML = out;
}

drawKline();
drawVolume();
drawTrend();
drawTicks();
```
